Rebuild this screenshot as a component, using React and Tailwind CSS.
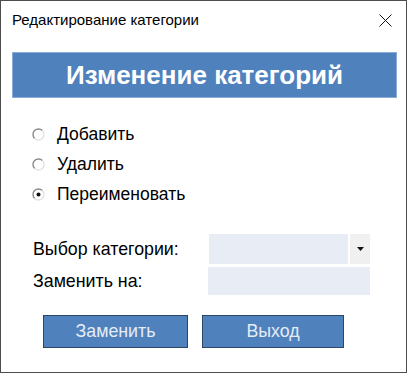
import React from "react";

function Radio({ checked }) {
  return (
    <svg width="13" height="13" viewBox="0 0 13 13" className="shrink-0">
      <circle cx="6.5" cy="6.5" r="5.5" fill="#fff" />
      <path d="M2.6 10.4 A5.5 5.5 0 0 1 10.4 2.6" fill="none" stroke="#8a8a8a" strokeWidth="1.4" />
      <path d="M10.4 2.6 A5.5 5.5 0 0 1 2.6 10.4" fill="none" stroke="#e3e3e3" strokeWidth="1.4" />
      {checked && <circle cx="6.5" cy="6.5" r="2" fill="#111" />}
    </svg>
  );
}

export default function App() {
  const options = [
    { label: "Добавить", checked: false },
    { label: "Удалить", checked: false },
    { label: "Переименовать", checked: true },
  ];

  return (
    <div
      className="w-[407px] h-[373px] bg-white border border-[#4d4d4d] flex flex-col"
      style={{ fontFamily: "'Liberation Sans', Arial, sans-serif" }}
    >
      {/* Title bar */}
      <div className="h-[39px] flex items-center justify-between pl-[11px] pr-[14px]">
        <span className="text-[15px] text-black">Редактирование категории</span>
        <svg width="13" height="13" viewBox="0 0 13 13">
          <path d="M0.5 0.5 L12.5 12.5 M12.5 0.5 L0.5 12.5" stroke="#111" strokeWidth="1" />
        </svg>
      </div>

      {/* Header banner */}
      <div className="ml-[11px] mt-[12px] w-[385px] h-[46px] bg-[#4f81bd] border border-[#8aacd8] flex items-center justify-center">
        <span className="text-white font-bold text-[26px] leading-none">Изменение категорий</span>
      </div>

      {/* Options */}
      <div className="mt-[21px] pl-[31px] flex flex-col">
        {options.map((o) => (
          <div key={o.label} className="h-[30px] flex items-center gap-[12px]">
            <Radio checked={o.checked} />
            <span className="text-[17.5px] text-black">{o.label}</span>
          </div>
        ))}
      </div>

      {/* Form */}
      <div className="mt-[25px] pl-[32px] flex flex-col gap-[3px]">
        <div className="flex items-center h-[30px]">
          <span className="w-[176px] text-[17.8px] text-black">Выбор категории:</span>
          <div className="flex h-[30px] w-[161px] gap-[2px]">
            <div className="flex-1 bg-[#e8edf5]" />
            <div className="w-[20px] bg-[#f0f0f0] flex items-center justify-center">
              <svg width="7" height="4" viewBox="0 0 7 4">
                <path d="M0 0 H7 L3.5 4 Z" fill="#111" />
              </svg>
            </div>
          </div>
        </div>
        <div className="flex items-center h-[28px]">
          <span className="w-[175px] text-[17.8px] text-black">Заменить на:</span>
          <div className="h-[28px] w-[162px] bg-[#e8edf5]" />
        </div>
      </div>

      {/* Buttons */}
      <div className="mt-[20px] pl-[42px] flex gap-[14px]">
        <button className="w-[145px] h-[33px] bg-[#4f81bd] border border-[#2c4668] text-[#e4ecf6] text-[17.8px]">
          Заменить
        </button>
        <button className="w-[142px] h-[33px] bg-[#4f81bd] border border-[#2c4668] text-[#e4ecf6] text-[17.8px]">
          Выход
        </button>
      </div>
    </div>
  );
}
